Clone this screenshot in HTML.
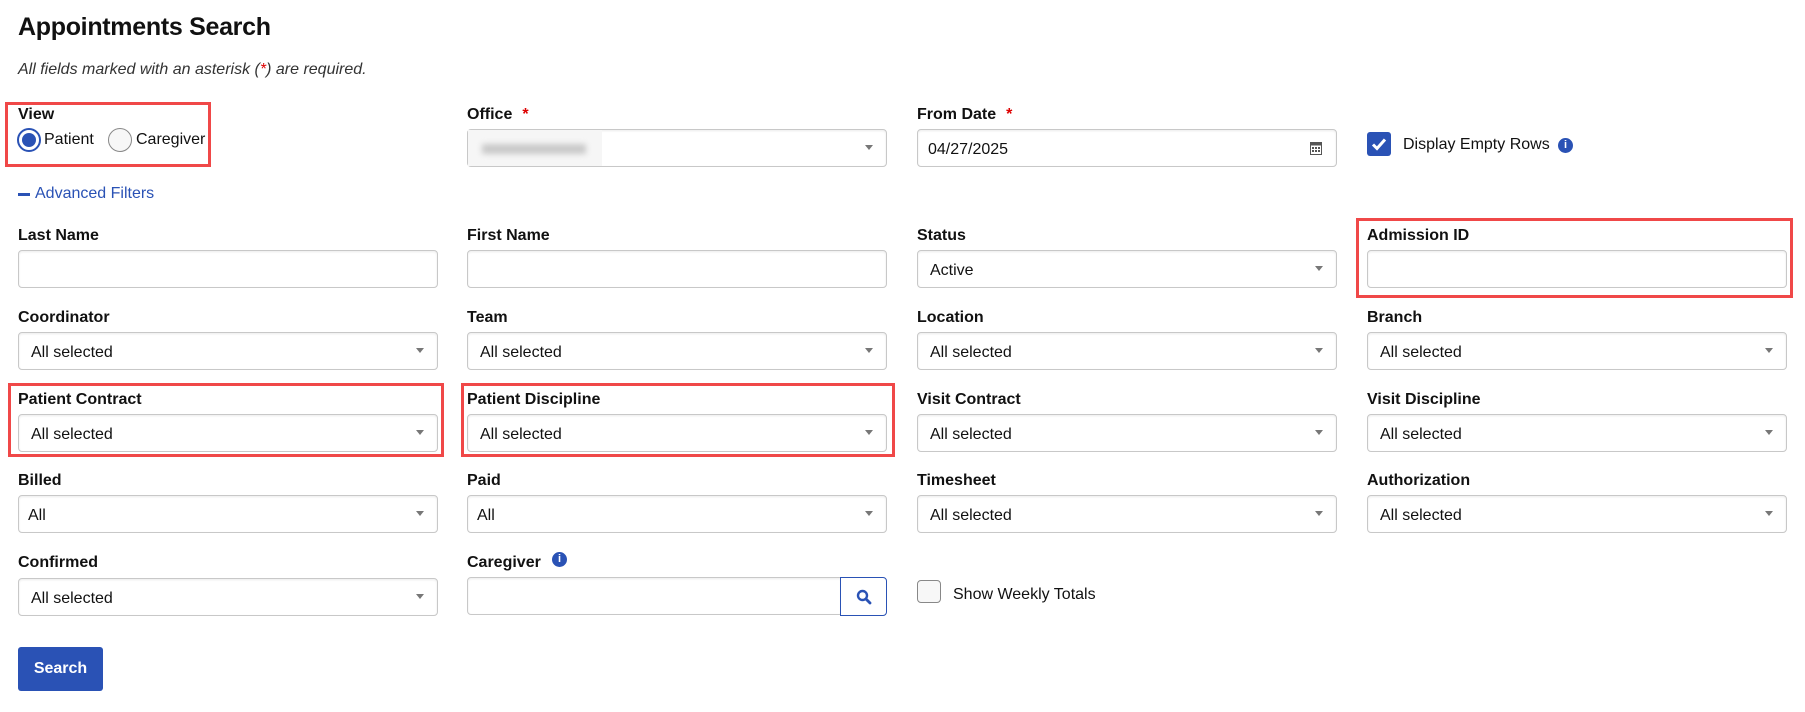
<!DOCTYPE html>
<html><head><meta charset="utf-8"><style>
*{box-sizing:border-box;margin:0;padding:0}
body{width:1805px;height:712px;background:#fff;font-family:"Liberation Sans",sans-serif;color:#111;position:relative;overflow:hidden}
.a{position:absolute}
h1{position:absolute;left:18px;top:13px;font-size:25px;font-weight:bold;letter-spacing:-0.3px}
.lbl{position:absolute;font-size:16px;font-weight:bold;line-height:20px}
.inp{position:absolute;height:38px;border:1px solid #c8c8c8;border-radius:4px;background:#fff;box-shadow:inset 0 1px 2px rgba(0,0,0,.08);font-size:16px;line-height:40px;padding-left:12px}
.sel::after{content:"";position:absolute;right:13px;top:15px;border-left:4.5px solid transparent;border-right:4.5px solid transparent;border-top:5px solid #777}
.red{position:absolute;border:3px solid #f04848}
.star{color:#d00;margin-left:10px}
</style></head><body>
<h1>Appointments Search</h1>
<div class="a" style="left:18px;top:61px;font-size:16px;font-style:italic;color:#333">All fields marked with an asterisk (<span style="color:#d00">*</span>) are required.</div>

<div class="red" style="left:5px;top:102px;width:206px;height:65px"></div>
<div class="lbl" style="left:18px;top:105px">View</div>
<div class="a" style="left:17px;top:128px;width:24px;height:24px;border:2px solid #2a52b5;border-radius:50%;background:#fff"><div style="margin:3px;width:14px;height:14px;border-radius:50%;background:#2a52b5"></div></div>
<div class="a" style="left:44px;top:131px;font-size:16px">Patient</div>
<div class="a" style="left:108px;top:128px;width:24px;height:24px;border:1px solid #888;border-radius:50%;background:#f7f7f7"></div>
<div class="a" style="left:136px;top:131px;font-size:16px">Caregiver</div>

<div class="lbl" style="left:467px;top:105px">Office<span class="star">*</span></div>
<div class="inp sel" style="left:467px;top:129px;width:420px"><div class="a" style="left:0;top:0;width:134px;height:36px;background:#f6f6f6"></div><div class="a" style="left:14px;top:14px;width:104px;height:10px;background:#c9c9c9;filter:blur(3px)"></div></div>

<div class="lbl" style="left:917px;top:105px">From Date<span class="star">*</span></div>
<div class="inp" style="left:917px;top:129px;width:420px;padding-left:10px">04/27/2025
<svg class="a" style="right:14px;top:12px" width="12" height="13" viewBox="0 0 12 13"><rect x="0.5" y="0.5" width="11" height="12" fill="none" stroke="#555"/><rect x="0.5" y="0.5" width="11" height="3" fill="#555"/><g fill="#555"><rect x="2" y="5" width="2" height="2"/><rect x="5" y="5" width="2" height="2"/><rect x="8" y="5" width="2" height="2"/><rect x="2" y="8" width="2" height="2"/><rect x="5" y="8" width="2" height="2"/><rect x="8" y="8" width="2" height="2"/></g></svg></div>

<div class="a" style="left:1367px;top:132px;width:24px;height:24px;background:#2a52b5;border-radius:3px"><svg width="24" height="24"><path d="M6 12.5l4 4 8-9" stroke="#fff" stroke-width="3" fill="none"/></svg></div>
<div class="a" style="left:1403px;top:136px;font-size:16px">Display Empty Rows</div>
<div class="a" style="left:1558px;top:138px;width:15px;height:15px;border-radius:50%;background:#2a52b5;color:#fff;font-size:11px;font-weight:bold;text-align:center;line-height:15px">i</div>

<div class="a" style="left:18px;top:193px;width:12px;height:3px;background:#2a52b5"></div>
<div class="a" style="left:35px;top:185px;font-size:16px;color:#2a52b5">Advanced Filters</div>

<div class="lbl" style="left:18px;top:226px">Last Name</div>
<div class="inp" style="left:18px;top:250px;width:420px"></div>
<div class="lbl" style="left:467px;top:226px">First Name</div>
<div class="inp" style="left:467px;top:250px;width:420px"></div>
<div class="lbl" style="left:917px;top:226px">Status</div>
<div class="inp sel" style="left:917px;top:250px;width:420px">Active</div>
<div class="red" style="left:1356px;top:218px;width:437px;height:80px"></div>
<div class="lbl" style="left:1367px;top:226px">Admission ID</div>
<div class="inp" style="left:1367px;top:250px;width:420px"></div>

<div class="lbl" style="left:18px;top:308px">Coordinator</div>
<div class="inp sel" style="left:18px;top:332px;width:420px">All selected</div>
<div class="lbl" style="left:467px;top:308px">Team</div>
<div class="inp sel" style="left:467px;top:332px;width:420px">All selected</div>
<div class="lbl" style="left:917px;top:308px">Location</div>
<div class="inp sel" style="left:917px;top:332px;width:420px">All selected</div>
<div class="lbl" style="left:1367px;top:308px">Branch</div>
<div class="inp sel" style="left:1367px;top:332px;width:420px">All selected</div>

<div class="red" style="left:8px;top:383px;width:436px;height:74px"></div>
<div class="red" style="left:461px;top:383px;width:434px;height:74px"></div>
<div class="lbl" style="left:18px;top:390px">Patient Contract</div>
<div class="inp sel" style="left:18px;top:414px;width:420px">All selected</div>
<div class="lbl" style="left:467px;top:390px">Patient Discipline</div>
<div class="inp sel" style="left:467px;top:414px;width:420px">All selected</div>
<div class="lbl" style="left:917px;top:390px">Visit Contract</div>
<div class="inp sel" style="left:917px;top:414px;width:420px">All selected</div>
<div class="lbl" style="left:1367px;top:390px">Visit Discipline</div>
<div class="inp sel" style="left:1367px;top:414px;width:420px">All selected</div>

<div class="lbl" style="left:18px;top:471px">Billed</div>
<div class="inp sel" style="left:18px;top:495px;width:420px;padding-left:9px">All</div>
<div class="lbl" style="left:467px;top:471px">Paid</div>
<div class="inp sel" style="left:467px;top:495px;width:420px;padding-left:9px">All</div>
<div class="lbl" style="left:917px;top:471px">Timesheet</div>
<div class="inp sel" style="left:917px;top:495px;width:420px">All selected</div>
<div class="lbl" style="left:1367px;top:471px">Authorization</div>
<div class="inp sel" style="left:1367px;top:495px;width:420px">All selected</div>

<div class="lbl" style="left:18px;top:553px">Confirmed</div>
<div class="inp sel" style="left:18px;top:578px;width:420px">All selected</div>
<div class="lbl" style="left:467px;top:553px">Caregiver</div>
<div class="a" style="left:552px;top:552px;width:15px;height:15px;border-radius:50%;background:#2a52b5;color:#fff;font-size:11px;font-weight:bold;text-align:center;line-height:15px">i</div>
<div class="inp" style="left:467px;top:577px;width:375px;border-radius:4px 0 0 4px"></div>
<div class="a" style="left:840px;top:577px;width:47px;height:39px;border:1px solid #2a52b5;border-radius:0 4px 4px 0;background:#fff"><svg class="a" style="left:15px;top:11px" width="16" height="16" viewBox="0 0 16 16"><circle cx="6.5" cy="6.5" r="4.5" stroke="#2a52b5" stroke-width="2.4" fill="none"/><path d="M10 10l4 4" stroke="#2a52b5" stroke-width="2.8" stroke-linecap="round"/></svg></div>
<div class="a" style="left:917px;top:580px;width:24px;height:23px;border:1px solid #888;border-radius:4px;background:#f7f7f7"></div>
<div class="a" style="left:953px;top:586px;font-size:16px">Show Weekly Totals</div>

<div class="a" style="left:18px;top:647px;width:85px;height:44px;background:#2a52b5;border-radius:3px;color:#fff;font-size:16px;font-weight:bold;text-align:center;line-height:44px">Search</div>
</body></html>
